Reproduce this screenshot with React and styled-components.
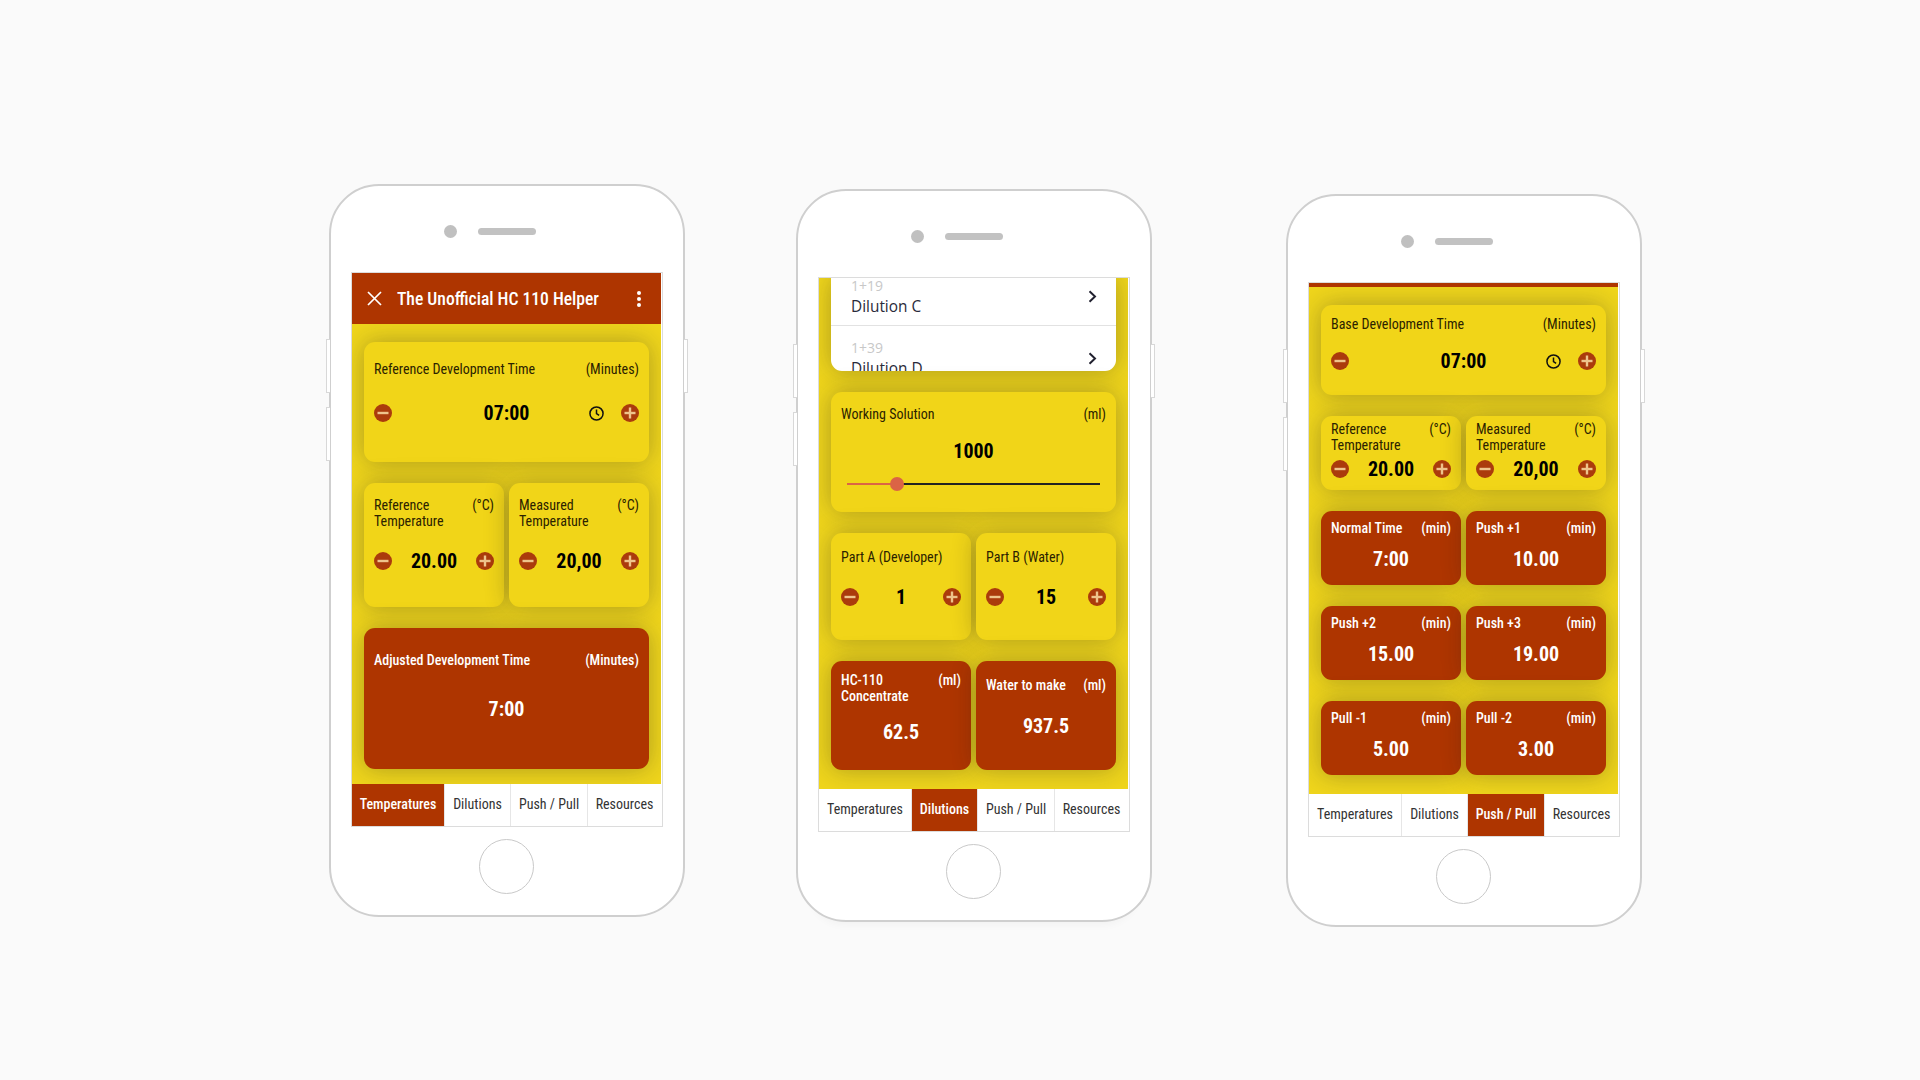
import React from 'react';
import styled, { createGlobalStyle } from 'styled-components';

const RUST = '#ae3500';
const YELLOW = '#f1d518';

const GlobalStyle = createGlobalStyle`
  html, body {
    margin: 0;
    padding: 0;
    background: #fafafa;
  }
  * {
    box-sizing: border-box;
  }
`;

const Stage = styled.div`
  display: flex;
  align-items: flex-start;
  width: 1920px;
  height: 1080px;
  padding-left: 329px;
  overflow: hidden;
  background: #fafafa;
`;

const PhoneBody = styled.div`
  position: relative;
  flex: none;
  display: flex;
  flex-direction: column;
  align-items: center;
  width: 356px;
  height: 733px;
  margin-left: ${(p) => p.$left}px;
  margin-top: ${(p) => p.$top}px;
  padding-top: 39px;
  background: #fff;
  border: 2px solid #cfcfcf;
  border-radius: 50px;
  box-shadow: ${(p) => (p.$glow ? '0 16px 9px -13px rgba(0, 0, 0, 0.035)' : 'none')};
`;

const SideKey = styled.div`
  position: absolute;
  ${(p) => p.$side}: -5px;
  top: ${(p) => p.$y}px;
  width: 4px;
  height: 54px;
  background: #fff;
  border: 1px solid #d8d8d8;
  border-${(p) => (p.$side === 'left' ? 'right' : 'left')}: none;
`;

const EarRow = styled.div`
  display: grid;
  grid-template-columns: 1fr 58px 1fr;
  align-items: center;
  width: 100%;
  height: 13px;
  margin-bottom: 34px;
`;

const Camera = styled.div`
  justify-self: end;
  width: 13px;
  height: 13px;
  margin-right: 21px;
  border-radius: 50%;
  background: #c0c0c0;
`;

const Speaker = styled.div`
  height: 7px;
  border-radius: 4px;
  background: #c2c2c2;
`;

const Screen = styled.div`
  display: flex;
  flex-direction: column;
  width: 312px;
  height: 555px;
  flex: none;
  padding-right: 1px;
  background: #fff;
  border: 1px solid #dcdcdc;
`;

const AppBar = styled.div`
  flex: none;
  display: flex;
  align-items: center;
  height: 51px;
  padding: 0 19px 0 15px;
  background: ${RUST};
  color: #fff;
`;

const AppTitle = styled.div`
  flex: 1;
  margin-left: 15px;
  font-family: Roboto, 'Liberation Sans', sans-serif;
  font-stretch: 75%;
  font-size: 17.6px;
  font-weight: 500;
`;

const Stripe = styled.div`
  flex: none;
  height: 4px;
  background: ${RUST};
`;

const Content = styled.div`
  flex: 1;
  min-height: 0;
  display: flex;
  flex-direction: column;
  gap: 21px;
  overflow: hidden;
  padding: ${(p) => p.$top}px 12px 0;
  background: #efd51c;
`;

const Row = styled.div`
  display: flex;
  gap: 5px;
`;

const Card = styled.div`
  flex: 1 1 0;
  min-width: 0;
  height: ${(p) => p.$height}px;
  padding: ${(p) => p.$pad}px 10px 0;
  background: ${(p) => (p.$red ? RUST : YELLOW)};
  color: ${(p) => (p.$red ? '#fff' : '#2b2200')};
  border-radius: 11px;
  box-shadow: 0 0 24px rgba(30, 30, 30, 0.32);
`;

const CardHead = styled.div`
  display: flex;
  justify-content: space-between;
  align-items: flex-start;
  gap: 8px;
  margin-bottom: ${(p) => p.$gap}px;
  font-family: Roboto, 'Liberation Sans', sans-serif;
  font-stretch: 75%;
  font-size: 14px;
  line-height: 16px;
  font-weight: ${(p) => (p.$red ? 500 : 400)};
`;

const Unit = styled.span`
  flex: none;
`;

const Value = styled.div`
  font-family: Roboto, 'Liberation Sans', sans-serif;
  font-stretch: 75%;
  font-size: 20px;
  font-weight: 700;
  line-height: 24px;
  text-align: center;
  color: ${(p) => (p.$red ? '#fff' : '#000')};
`;

const Stepper = styled.div`
  display: grid;
  grid-template-columns: 1fr auto 1fr;
  align-items: center;
  height: 18px;
  & > ${Value} {
    line-height: 18px;
  }
`;

const StepEnd = styled.div`
  display: flex;
  align-items: center;
  justify-content: ${(p) => (p.$right ? 'flex-end' : 'flex-start')};
  gap: 17px;
`;

const SliderTrack = styled.div`
  position: relative;
  height: 2px;
  margin: ${(p) => p.$top}px 6px 0;
  background: #222;
`;

const SliderFill = styled.div`
  height: 2px;
  background: #db6445;
`;

const SliderThumb = styled.div`
  position: absolute;
  top: -6px;
  width: 14px;
  height: 14px;
  margin-left: -7px;
  border-radius: 50%;
  background: #db6445;
`;

const ListCard = styled.div`
  flex: none;
  height: 93px;
  overflow: hidden;
  background: #fff;
  border-radius: 0 0 11px 11px;
  box-shadow: 0 0 24px rgba(30, 30, 30, 0.32);
`;

const ListItem = styled.div`
  display: flex;
  align-items: center;
  justify-content: space-between;
  height: 62px;
  padding: 4px 19px 0 20px;
  margin-top: ${(p) => p.$offset || 0}px;
  border-bottom: 1px solid #e2e2e2;
  font-family: 'Open Sans', sans-serif;
`;

const ListRatio = styled.div`
  font-size: 14px;
  line-height: 21px;
  color: #c8c8c8;
`;

const ListName = styled.div`
  font-size: 15.4px;
  line-height: 22px;
  color: #2a2a3a;
`;

const TabBar = styled.div`
  flex: none;
  display: grid;
  grid-template-columns: 92px 66px 77px 1fr;
  height: 42px;
  background: #fff;
`;

const Tab = styled.div`
  display: flex;
  align-items: center;
  justify-content: center;
  padding-bottom: 2px;
  font-family: Roboto, 'Liberation Sans', sans-serif;
  font-stretch: 75%;
  font-size: 14px;
  font-weight: ${(p) => (p.$active ? 500 : 400)};
  color: ${(p) => (p.$active ? '#fff' : '#333')};
  background: ${(p) => (p.$active ? RUST : '#fff')};
  & + & {
    border-left: 1px solid #e6e6e6;
  }
`;

const HomeButton = styled.div`
  flex: none;
  width: 55px;
  height: 55px;
  margin-top: 12px;
  margin-right: 1px;
  border: 1.5px solid #c9c9c9;
  border-radius: 50%;
`;

function MinusIcon() {
  return (
    <svg width="18" height="18" viewBox="0 0 18 18">
      <circle cx="9" cy="9" r="9" fill="#ab3b0c" />
      <rect x="3.5" y="7.8" width="11" height="2.4" fill="#eec48c" />
    </svg>
  );
}

function PlusIcon() {
  return (
    <svg width="18" height="18" viewBox="0 0 18 18">
      <circle cx="9" cy="9" r="9" fill="#ab3b0c" />
      <rect x="3.5" y="7.8" width="11" height="2.4" fill="#eec48c" />
      <rect x="7.8" y="3.5" width="2.4" height="11" fill="#eec48c" />
    </svg>
  );
}

function ClockIcon() {
  return (
    <svg width="15" height="15" viewBox="0 0 16 16" fill="none" stroke="#111" strokeWidth="1.6">
      <circle cx="8" cy="8" r="7" />
      <path d="M8 3.8V8l2.8 2" />
    </svg>
  );
}

function CloseIcon() {
  return (
    <svg width="15" height="15" viewBox="0 0 15 15" fill="none" stroke="#fff" strokeWidth="1.7">
      <path d="M1 1l13 13M14 1L1 14" />
    </svg>
  );
}

function DotsIcon() {
  return (
    <svg width="6" height="18" viewBox="0 0 6 18" fill="#fff">
      <circle cx="3" cy="3" r="2" />
      <circle cx="3" cy="9" r="2" />
      <circle cx="3" cy="15" r="2" />
    </svg>
  );
}

function ChevronIcon() {
  return (
    <svg width="9" height="13" viewBox="0 0 9 13" fill="none" stroke="#222230" strokeWidth="2">
      <path d="M1.5 1.2L7 6.5l-5.5 5.3" />
    </svg>
  );
}

function Phone({ left, top, glow, children }) {
  return (
    <PhoneBody $left={left} $top={top} $glow={glow}>
      <SideKey $side="left" $y={153} />
      <SideKey $side="left" $y={221} />
      <SideKey $side="right" $y={153} />
      <EarRow>
        <Camera />
        <Speaker />
      </EarRow>
      <Screen>{children}</Screen>
      <HomeButton />
    </PhoneBody>
  );
}

function Tabs({ active }) {
  return (
    <TabBar>
      {['Temperatures', 'Dilutions', 'Push / Pull', 'Resources'].map((name) => (
        <Tab key={name} $active={name === active}>
          {name}
        </Tab>
      ))}
    </TabBar>
  );
}

function StepCard({ height, pad, gap, label, unit, value, clock }) {
  return (
    <Card $height={height} $pad={pad}>
      <CardHead $gap={gap}>
        <span>{label}</span>
        {unit && <Unit>{unit}</Unit>}
      </CardHead>
      <Stepper>
        <StepEnd>
          <MinusIcon />
        </StepEnd>
        <Value>{value}</Value>
        <StepEnd $right>
          {clock && <ClockIcon />}
          <PlusIcon />
        </StepEnd>
      </Stepper>
    </Card>
  );
}

function ResultCard({ height, pad, gap, label, unit, value }) {
  return (
    <Card $red $height={height} $pad={pad}>
      <CardHead $red $gap={gap}>
        <span>{label}</span>
        <Unit>{unit}</Unit>
      </CardHead>
      <Value $red>{value}</Value>
    </Card>
  );
}

export default function App() {
  return (
    <Stage>
      <GlobalStyle />

      <Phone left={0} top={184}>
        <AppBar>
          <CloseIcon />
          <AppTitle>The Unofficial HC 110 Helper</AppTitle>
          <DotsIcon />
        </AppBar>
        <Content $top={18}>
          <Row>
            <StepCard height={120} pad={19} gap={27} label="Reference Development Time" unit="(Minutes)" value="07:00" clock />
          </Row>
          <Row>
            <StepCard height={124} pad={14} gap={23} label={<>Reference<br />Temperature</>} unit="(°C)" value="20.00" />
            <StepCard height={124} pad={14} gap={23} label={<>Measured<br />Temperature</>} unit="(°C)" value="20,00" />
          </Row>
          <Row>
            <ResultCard height={141} pad={24} gap={29} label="Adjusted Development Time" unit="(Minutes)" value="7:00" />
          </Row>
        </Content>
        <Tabs active="Temperatures" />
      </Phone>

      <Phone left={111} top={189} glow>
        <Content $top={0}>
          <ListCard>
            <ListItem $offset={-14}>
              <div>
                <ListRatio>1+19</ListRatio>
                <ListName>Dilution C</ListName>
              </div>
              <ChevronIcon />
            </ListItem>
            <ListItem>
              <div>
                <ListRatio>1+39</ListRatio>
                <ListName>Dilution D</ListName>
              </div>
              <ChevronIcon />
            </ListItem>
          </ListCard>
          <Row>
            <Card $height={120} $pad={14}>
              <CardHead $gap={17}>
                <span>Working Solution</span>
                <Unit>(ml)</Unit>
              </CardHead>
              <Value>1000</Value>
              <SliderTrack $top={20}>
                <SliderFill style={{ width: '19.8%' }} />
                <SliderThumb style={{ left: '19.8%' }} />
              </SliderTrack>
            </Card>
          </Row>
          <Row>
            <StepCard height={107} pad={16} gap={23} label="Part A (Developer)" value="1" />
            <StepCard height={107} pad={16} gap={23} label="Part B (Water)" value="15" />
          </Row>
          <Row>
            <ResultCard height={109} pad={11} gap={16} label={<>HC-110<br />Concentrate</>} unit="(ml)" value="62.5" />
            <ResultCard height={109} pad={16} gap={21} label="Water to make" unit="(ml)" value="937.5" />
          </Row>
        </Content>
        <Tabs active="Dilutions" />
      </Phone>

      <Phone left={134} top={194}>
        <Stripe />
        <Content $top={18}>
          <Row>
            <StepCard height={90} pad={11} gap={20} label="Base Development Time" unit="(Minutes)" value="07:00" clock />
          </Row>
          <Row>
            <StepCard height={74} pad={5} gap={7} label={<>Reference<br />Temperature</>} unit="(°C)" value="20.00" />
            <StepCard height={74} pad={5} gap={7} label={<>Measured<br />Temperature</>} unit="(°C)" value="20,00" />
          </Row>
          <Row>
            <ResultCard height={74} pad={9} gap={11} label="Normal Time" unit="(min)" value="7:00" />
            <ResultCard height={74} pad={9} gap={11} label="Push +1" unit="(min)" value="10.00" />
          </Row>
          <Row>
            <ResultCard height={74} pad={9} gap={11} label="Push +2" unit="(min)" value="15.00" />
            <ResultCard height={74} pad={9} gap={11} label="Push +3" unit="(min)" value="19.00" />
          </Row>
          <Row>
            <ResultCard height={74} pad={9} gap={11} label="Pull -1" unit="(min)" value="5.00" />
            <ResultCard height={74} pad={9} gap={11} label="Pull -2" unit="(min)" value="3.00" />
          </Row>
        </Content>
        <Tabs active="Push / Pull" />
      </Phone>
    </Stage>
  );
}
